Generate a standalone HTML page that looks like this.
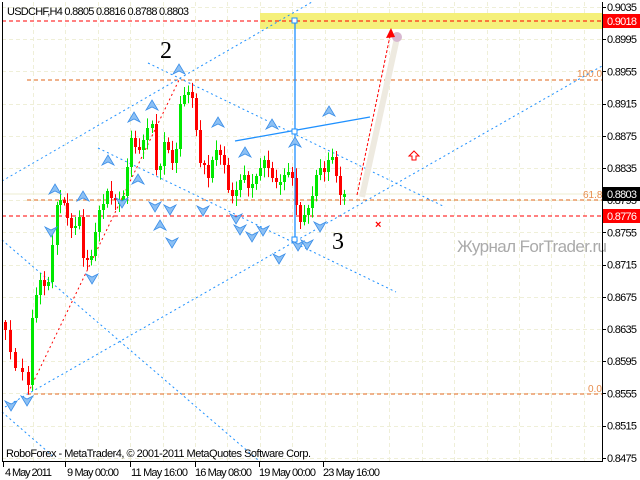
<!DOCTYPE html>
<html><head><meta charset="utf-8"><style>
html,body{margin:0;padding:0;background:#fff;width:640px;height:480px;overflow:hidden}
svg{display:block}
.t{font-family:"Liberation Sans",sans-serif;}
</style></head><body>
<svg id="s" width="640" height="480" viewBox="0 0 640 480" xmlns="http://www.w3.org/2000/svg">
<rect width="640" height="480" fill="#fff"/>
<g id="grid" stroke="#EFEFD8" stroke-width="1" stroke-dasharray="4,3"></g>
<rect x="260" y="13" width="342" height="16" fill="#F5F07A"/>
<line x1="2" y1="21" x2="602" y2="21" stroke="#F00" stroke-dasharray="4,3"/>
<line x1="2" y1="216" x2="602" y2="216" stroke="#F00" stroke-dasharray="4,3"/>
<line x1="2" y1="194" x2="602" y2="194" stroke="#EEEED0"/>
<g stroke="#E0651A" stroke-dasharray="4,3">
<line x1="27" y1="80" x2="602" y2="80"/>
<line x1="27" y1="200" x2="602" y2="200"/>
<line x1="27" y1="394" x2="602" y2="394"/>
</g>
<g class="t" fill="#E88E4E" font-size="10"><text x="577" y="77">100.0</text><text x="583" y="198">61.8</text><text x="588" y="392">0.0</text></g>
<g stroke="#1E90FF" stroke-dasharray="2,3" fill="none">
<line x1="2" y1="181" x2="312" y2="2"/>
<line x1="5" y1="407" x2="602" y2="66"/>
<line x1="148" y1="63" x2="445" y2="207"/>
<line x1="98" y1="148" x2="396" y2="292"/>
<line x1="2" y1="240" x2="258" y2="460"/>
<line x1="2" y1="412" x2="55" y2="458"/>
</g>
<line x1="28" y1="393" x2="179" y2="80" stroke="#F00" stroke-dasharray="2,3"/>
<g id="candles"></g>
<line x1="235" y1="141" x2="370" y2="117" stroke="#1E90FF" stroke-width="1.3"/>
<line x1="295" y1="21" x2="295" y2="240" stroke="#1E90FF" stroke-width="1.3"/>
<g fill="#fff" stroke="#1E90FF"><rect x="292" y="18" width="5" height="5"/><rect x="292" y="129" width="5" height="5"/><rect x="292" y="237" width="5" height="5"/></g>
<line x1="362" y1="197" x2="397" y2="38" stroke="#EEEAE0" stroke-width="6"/>
<circle cx="397" cy="37" r="5" fill="#D8B8D0"/>
<line x1="357" y1="195" x2="390" y2="36" stroke="#F00" stroke-dasharray="3,2"/>
<polygon points="391,28 386,38 395,37" fill="#F00"/>
<path d="M414,151 l-5,5 h3 v4 h4 v-4 h3 z" fill="#fff" stroke="#F00"/>
<text class="t" x="375" y="228" fill="#F00" font-size="11" font-weight="bold">×</text>
<g id="fr" fill="#8CC0F4" stroke="#3A8EE8" stroke-width="0.8"></g>
<text x="160" y="58" style="font-family:'Liberation Serif',serif" font-size="24">2</text>
<text x="332" y="249" style="font-family:'Liberation Serif',serif" font-size="24">3</text>
<text class="t" x="457" y="252" fill="#AAAAAA" font-size="17" textLength="150">Журнал ForTrader.ru</text>
<text class="t" x="7" y="15" font-size="11" fill="#000" textLength="182">USDCHF,H4  0.8805 0.8816 0.8788 0.8803</text>
<text class="t" x="6" y="457" font-size="11" fill="#000" textLength="305">RoboForex - MetaTrader4, © 2001-2011 MetaQuotes Software Corp.</text>
<line x1="2.5" y1="2" x2="2.5" y2="462" stroke="#000"/>
<line x1="2" y1="461.5" x2="603" y2="461.5" stroke="#000"/>
<line x1="602.5" y1="2" x2="602.5" y2="462" stroke="#000"/>
<g id="axis" class="t" font-size="11" fill="#000"></g>
<rect x="603" y="14" width="37" height="14" fill="#F00"/><text class="t" x="607" y="25" font-size="11" fill="#fff" textLength="30">0.9018</text>
<rect x="603" y="187" width="37" height="14" fill="#000"/><text class="t" x="607" y="198" font-size="11" fill="#fff" textLength="30">0.8803</text>
<rect x="603" y="209" width="37" height="14" fill="#F00"/><text class="t" x="607" y="220" font-size="11" fill="#fff" textLength="30">0.8776</text>
<g class="t" font-size="11" fill="#000">
<text x="5" y="476" textLength="47">4 May 2011</text><text x="67" y="476" textLength="52">9 May 00:00</text><text x="131" y="476" textLength="57">11 May 16:00</text><text x="195" y="476" textLength="57">16 May 08:00</text><text x="259" y="476" textLength="57">19 May 00:00</text><text x="323" y="476" textLength="57">23 May 16:00</text>
</g>
<g stroke="#000"><line x1="3.5" y1="462" x2="3.5" y2="467"/><line x1="65.5" y1="462" x2="65.5" y2="467"/><line x1="130.5" y1="462" x2="130.5" y2="467"/><line x1="195.5" y1="462" x2="195.5" y2="467"/><line x1="259.5" y1="462" x2="259.5" y2="467"/><line x1="323.5" y1="462" x2="323.5" y2="467"/></g>
</svg>
<script>
(function(){
var NS="http://www.w3.org/2000/svg";
function el(t,a,p){var e=document.createElementNS(NS,t);for(var k in a)e.setAttribute(k,a[k]);p.appendChild(e);return e;}
var g=document.getElementById('grid');
for(var x=33;x<600;x+=32.4){el('line',{x1:Math.round(x)+.5,y1:2,x2:Math.round(x)+.5,y2:461},g);}
var ax=document.getElementById('axis');
for(var i=0;i<15;i++){var y=7+i*32.2;el('line',{x1:2,y1:Math.round(y)+.5,x2:602,y2:Math.round(y)+.5},g);
 var p=(0.9035-i*0.004).toFixed(4);
 var t=el('text',{x:607,y:y+4,textLength:30},ax);t.textContent=p;
 el('line',{x1:602,y1:Math.round(y)+.5,x2:606,y2:Math.round(y)+.5,stroke:'#000'},ax);}
var kp=[[5,330],[10,352],[15,368],[22,372],[28,385],[32,318],[36,295],[40,280],[44,286],[48,282],[52,245],[57,205],[60,200],[64,203],[67,218],[71,228],[75,226],[79,217],[83,258],[87,260],[91,256],[95,232],[99,210],[103,204],[107,191],[111,198],[115,200],[119,201],[123,196],[127,167],[131,138],[135,147],[139,150],[143,140],[147,128],[152,124],[156,170],[160,166],[164,142],[168,150],[172,163],[176,149],[180,104],[184,95],[188,92],[192,98],[196,130],[200,163],[204,165],[208,178],[212,160],[216,150],[220,155],[224,165],[228,190],[232,196],[236,190],[240,180],[244,175],[248,188],[252,184],[256,176],[260,168],[264,160],[268,168],[272,178],[276,182],[280,182],[284,175],[288,172],[292,178],[296,205],[300,222],[304,215],[308,208],[312,196],[316,175],[320,168],[324,172],[328,160],[332,157],[336,176],[340,195],[344,194]];
var c=document.getElementById('candles');var prev=kp[0][1]-8;
for(var i=0;i<kp.length;i++){var x=kp[i][0],cl=kp[i][1],op=prev;
 if(Math.abs(cl-op)<2)op=cl+((i%2)?3:-3);
 var bt=Math.min(op,cl),bb=Math.max(op,cl);
 var hi=bt-2-Math.abs(Math.sin(i*1.7))*8,lo=bb+2+Math.abs(Math.cos(i*2.3))*8;
 var col=cl<op?'#00E800':'#F00';
 el('line',{x1:x+.5,y1:hi,x2:x+.5,y2:lo,stroke:col},c);
 el('rect',{x:x-1,y:bt,width:3,height:Math.max(1,bb-bt),fill:col},c);
 prev=cl;}
var fr=document.getElementById('fr');
var up=[[55,190],[83,197],[108,161],[134,118],[152,106],[179,70],[218,123],[245,153],[272,125],[295,143],[329,112],[138,180],[160,226]];
var dn=[[11,405],[27,400],[51,231],[92,278],[122,202],[155,206],[170,209],[172,242],[203,210],[236,218],[240,229],[252,236],[263,230],[279,258],[298,245],[307,244],[320,226]];
up.forEach(function(p){el('path',{d:'M'+p[0]+','+(p[1]-6)+' l6,10 l-6,-3 l-6,3 z'},fr);});
dn.forEach(function(p){el('path',{d:'M'+p[0]+','+(p[1]+6)+' l6,-10 l-6,3 l-6,-3 z'},fr);});
})();
</script>
</body></html>
